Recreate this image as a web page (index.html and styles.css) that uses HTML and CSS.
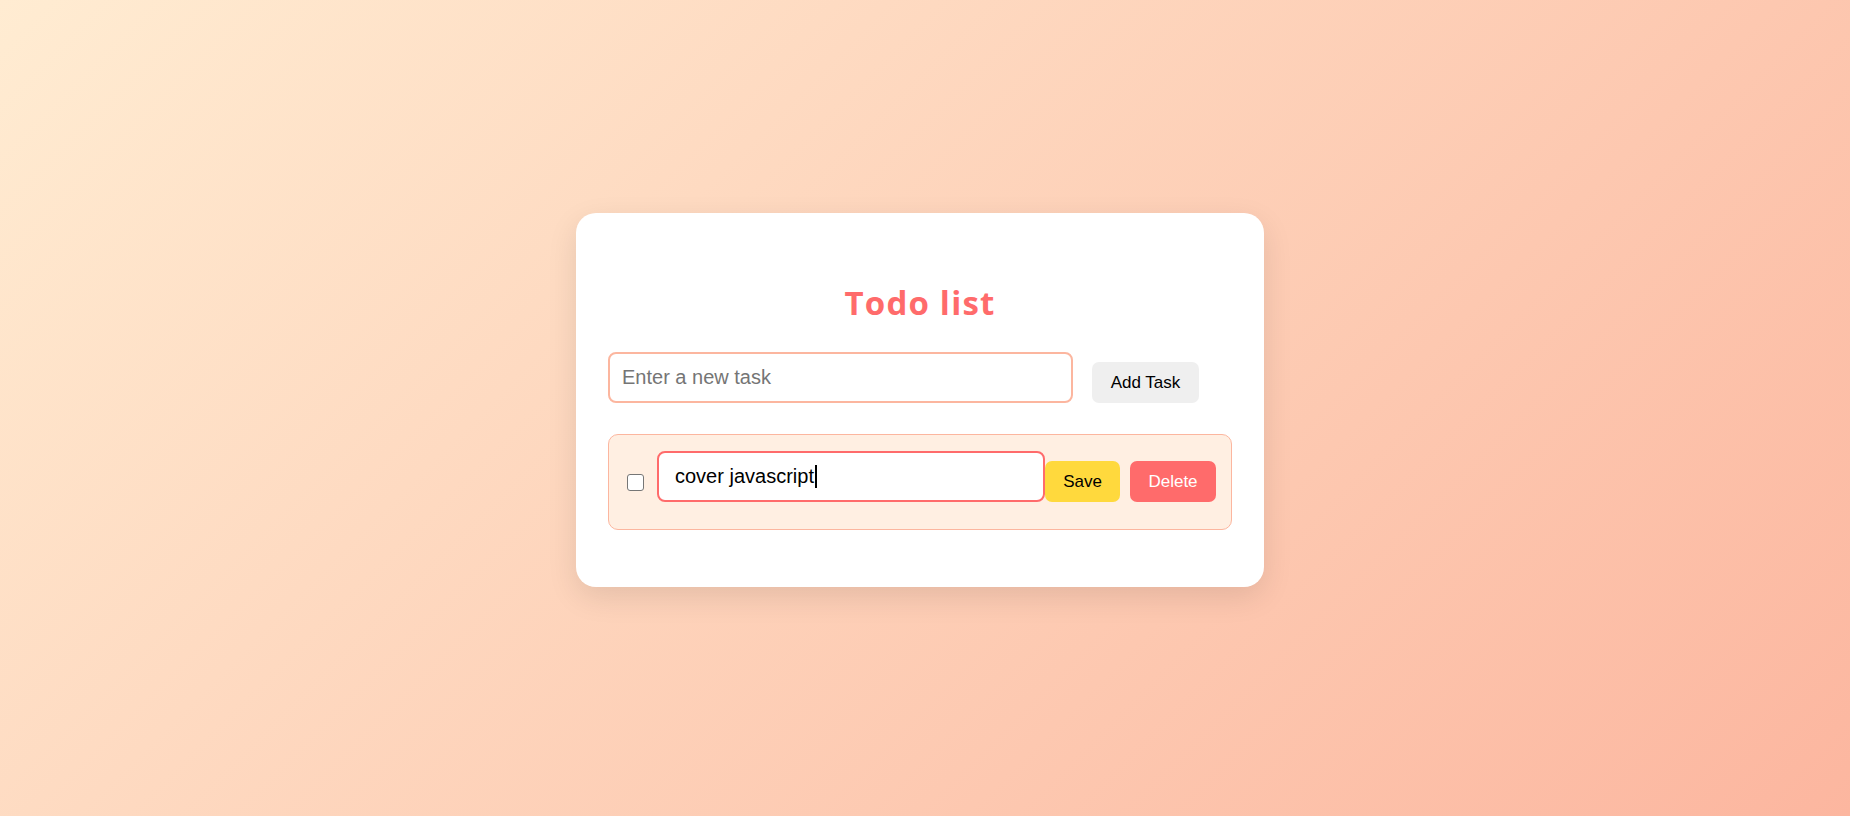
FILE: index.html
```html
<!DOCTYPE html>
<html lang="en">
<head>
<meta charset="utf-8">
<title>Todo list</title>
<link rel="stylesheet" href="styles.css">
</head>
<body>
<main class="page">
  <section class="card">
    <h1 class="title">Todo list</h1>
    <form class="add-row">
      <input class="task-input" type="text" placeholder="Enter a new task">
      <button type="button" class="btn btn-add">Add Task</button>
    </form>
    <ul class="todo-list">
      <li class="todo-item">
        <input type="checkbox" class="todo-check">
        <div class="edit-field">cover javascript<span class="caret"></span></div>
        <button type="button" class="btn btn-save">Save</button>
        <button type="button" class="btn btn-delete">Delete</button>
      </li>
    </ul>
  </section>
</main>
</body>
</html>
```

FILE: styles.css
```css
* {
  box-sizing: border-box;
}

html, body {
  margin: 0;
  padding: 0;
}

body {
  font-family: "Liberation Sans", Arial, sans-serif;
  background: linear-gradient(135deg, #ffecd2 0%, #fcb69f 100%);
  min-height: 100vh;
}

.page {
  height: 100vh;
  display: flex;
  align-items: center;
  justify-content: center;
  padding: 0 10px 16px 0;
}

.card {
  width: 688px;
  background: #ffffff;
  border-radius: 20px;
  padding: 32px;
  box-shadow: 0 10px 30px rgba(0, 0, 0, 0.1);
}

.title {
  margin: 38px 0 29px;
  height: 40px;
  line-height: 40px;
  font-family: "Open Sans", "Noto Sans", sans-serif;
  font-size: 33px;
  letter-spacing: 1.2px;
  font-weight: 700;
  color: #ff6b6b;
  text-align: center;
}

.add-row {
  display: flex;
  align-items: flex-end;
  margin: 0 0 31px;
}

.task-input {
  width: 465px;
  height: 51px;
  padding: 12px;
  margin: 0 19px 0 0;
  border: 2px solid #fcb69f;
  border-radius: 8px;
  font-family: "Liberation Sans", Arial, sans-serif;
  font-size: 20px;
  line-height: 23px;
  color: #000;
  outline: none;
  background: #fff;
}

.task-input::placeholder {
  color: #757575;
}

.btn {
  border: none;
  border-radius: 7px;
  height: 41px;
  padding: 0 18px;
  font-family: "Liberation Sans", Arial, sans-serif;
  font-size: 17px;
  line-height: 21px;
  cursor: pointer;
}

.btn-add {
  width: 107px;
  background: #efefef;
  color: #000;
}

.todo-list {
  list-style: none;
  margin: 0 0 25px;
  padding: 0;
}

.todo-item {
  display: flex;
  align-items: flex-end;
  height: 96px;
  padding: 16px 15px 27px 18px;
  background: #ffefe2;
  border: 1px solid #fcb69f;
  border-radius: 10px;
}

.todo-check {
  appearance: none;
  -webkit-appearance: none;
  width: 17px;
  height: 17px;
  margin: 0 13px 11px 0;
  border: 1.5px solid #767676;
  border-radius: 3px;
  background: #fff;
  flex: none;
}

.edit-field {
  flex: 1;
  height: 51px;
  padding: 12px 16px;
  border: 2px solid #ff6b6b;
  border-radius: 8px;
  background: #fff;
  font-size: 20px;
  line-height: 23px;
  color: #000;
  white-space: nowrap;
}

.caret {
  display: inline-block;
  width: 2px;
  height: 23px;
  margin-left: 1px;
  background: #000;
  vertical-align: -5px;
}

.btn-save {
  width: 75px;
  background: #ffd93d;
  color: #000;
}

.btn-delete {
  width: 86px;
  margin-left: 10px;
  background: #ff6b6b;
  color: #fff;
}
```
